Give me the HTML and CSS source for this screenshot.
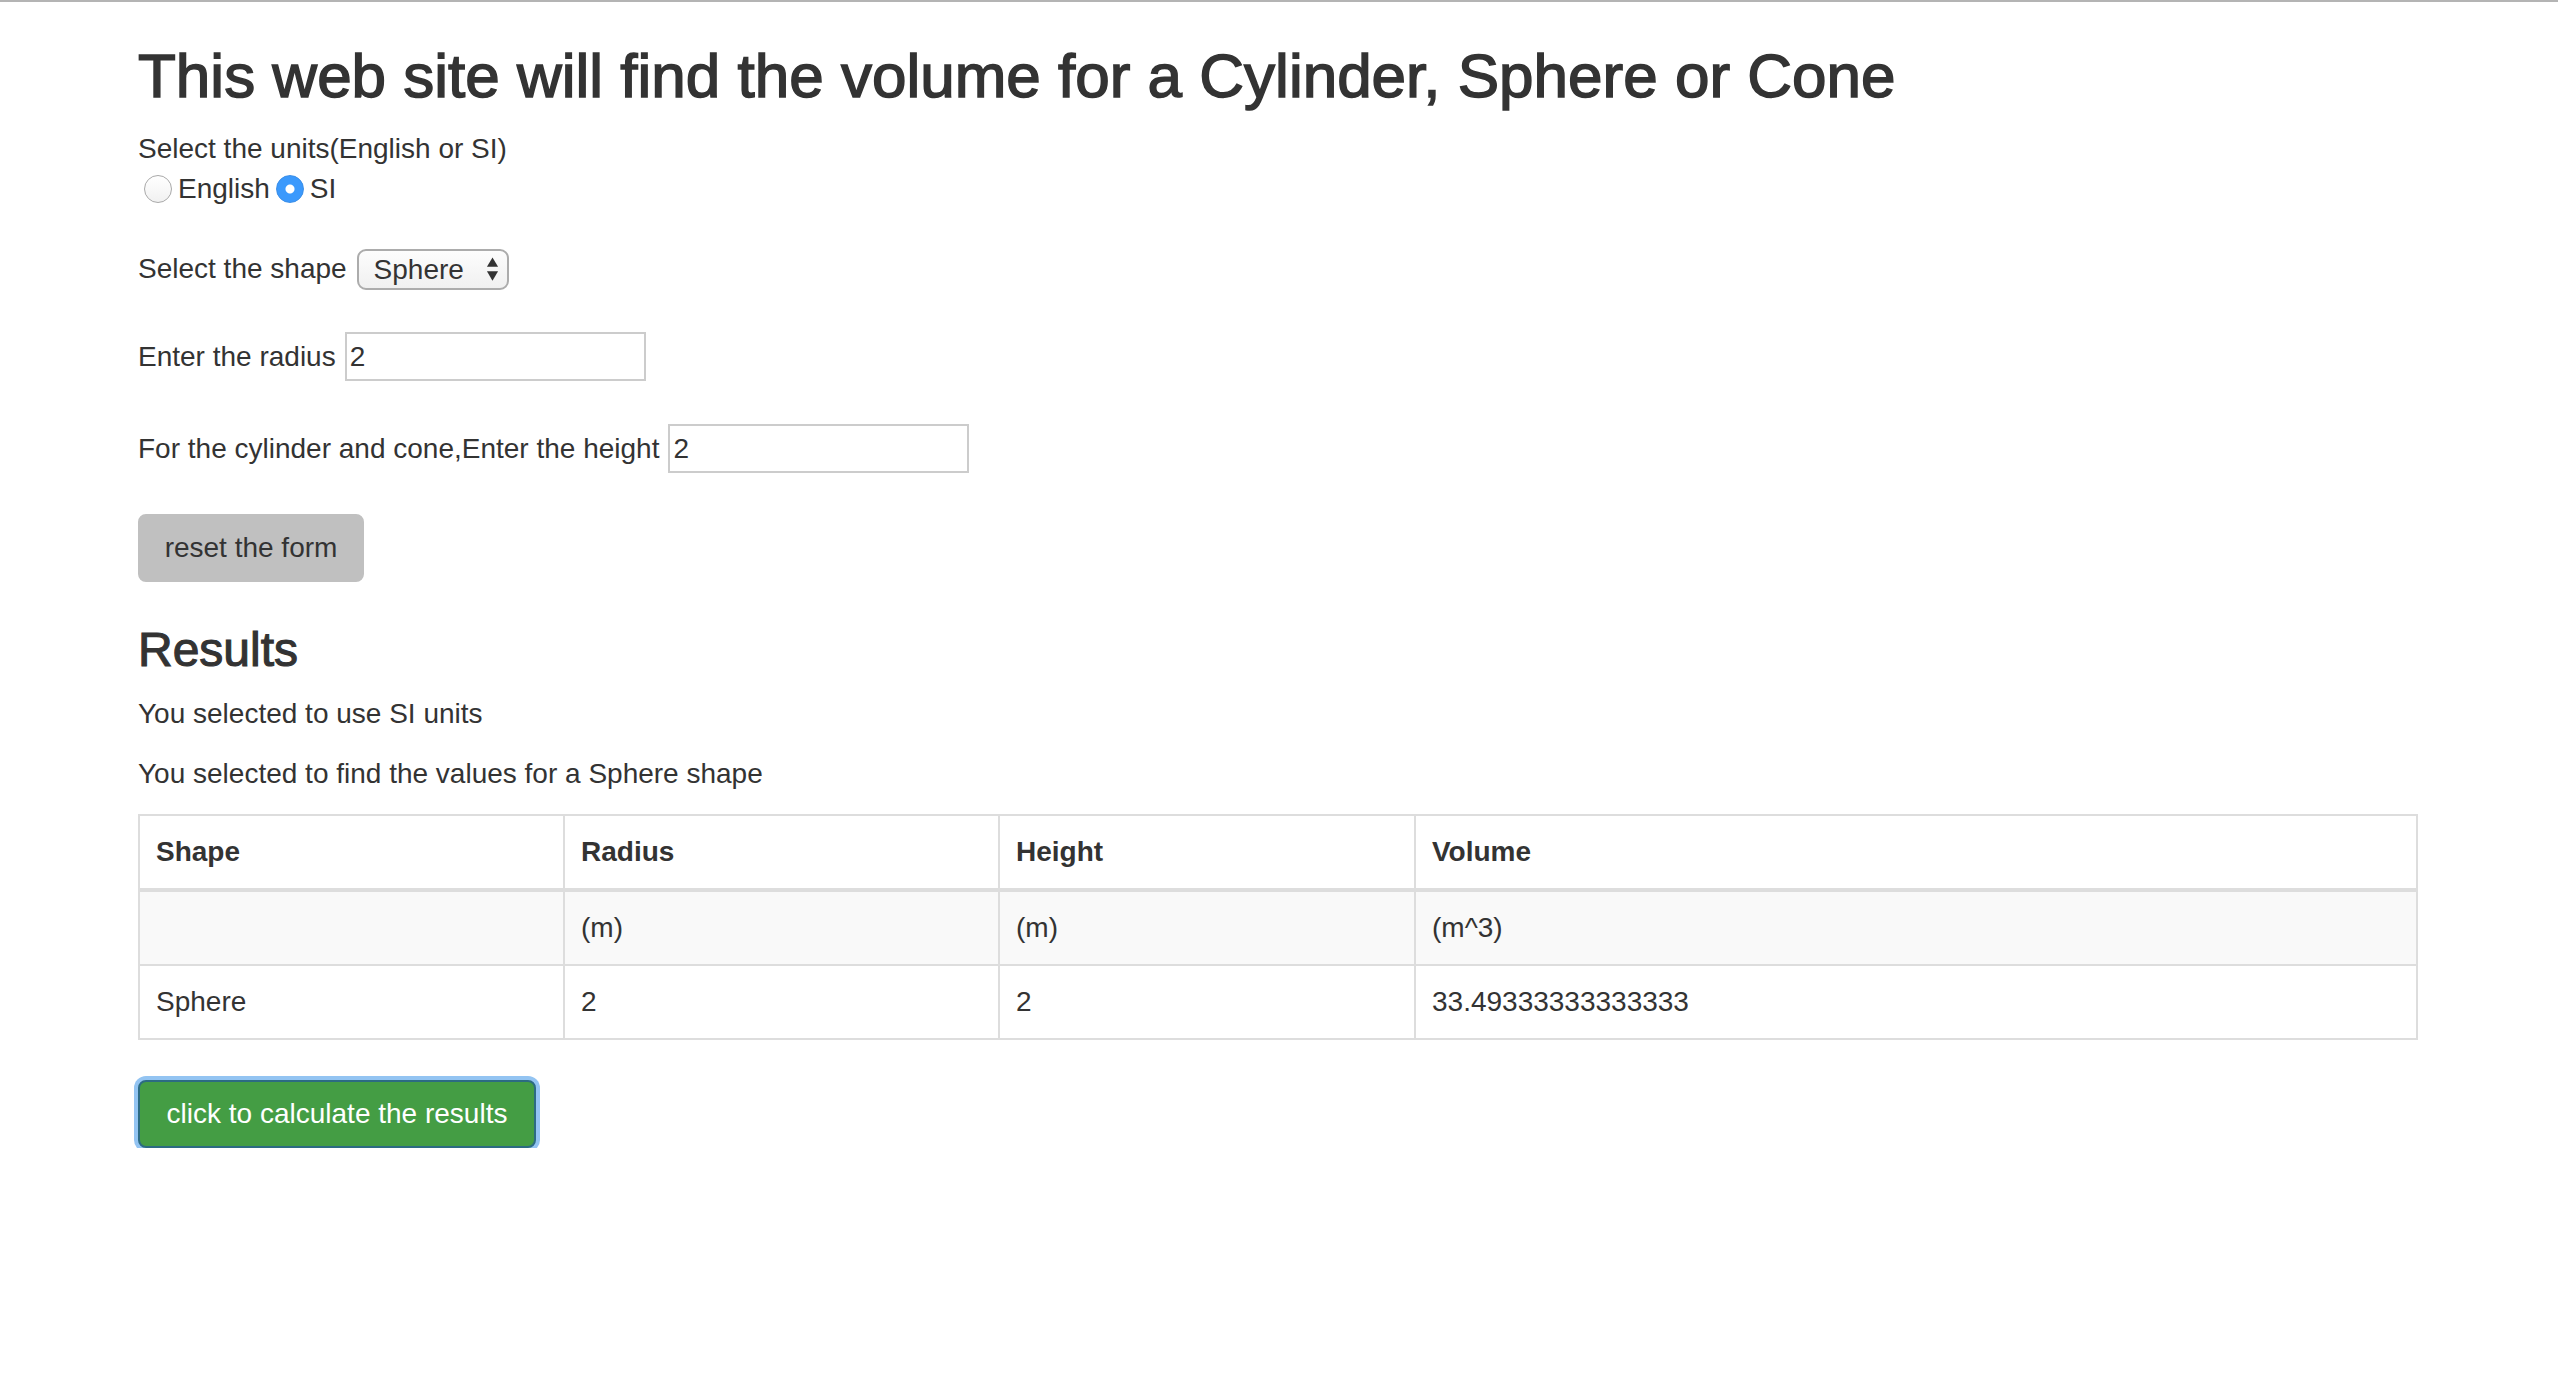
FILE: index.html
```html
<!DOCTYPE html>
<html lang="en">
<head>
<meta charset="utf-8">
<title>Volume calculator</title>
<link rel="stylesheet" href="styles.css">
</head>
<body>
<div class="topline"></div>
<div class="container">
  <h2 class="title">This web site will find the volume for a Cylinder, Sphere or Cone</h2>
  <form class="calc">
    <div class="units-label">Select the units(English or SI)</div>
    <div class="radio-row">
      <input class="radio" type="radio" name="units" id="u-en"><label for="u-en" class="radio-label">English</label>
      <input class="radio" type="radio" name="units" id="u-si" checked><label for="u-si" class="radio-label">SI</label>
    </div>
    <div class="field field-shape">
      <label for="shape">Select the shape</label>
      <span class="select-wrap">
        <select id="shape" class="select"><option>Cylinder</option><option selected>Sphere</option><option>Cone</option></select>
        <svg class="select-arrows" width="14" height="26" viewBox="0 0 14 26"><path d="M7 0 L13 10 L1 10 Z" fill="#333"/><path d="M1 15 L13 15 L7 25 Z" fill="#333"/></svg>
      </span>
    </div>
    <div class="field field-radius">
      <label for="radius">Enter the radius</label>
      <input id="radius" class="text-input" type="text" value="2">
    </div>
    <div class="field field-height">
      <label for="height">For the cylinder and cone,Enter the height</label>
      <input id="height" class="text-input" type="text" value="2">
    </div>
    <button type="reset" class="btn btn-reset">reset the form</button>
  </form>

  <h3 class="results-title">Results</h3>
  <p class="info">You selected to use SI units</p>
  <p class="info">You selected to find the values for a Sphere shape</p>

  <table class="results">
    <colgroup>
      <col class="c1"><col class="c2"><col class="c3"><col class="c4">
    </colgroup>
    <thead>
      <tr><th>Shape</th><th>Radius</th><th>Height</th><th>Volume</th></tr>
    </thead>
    <tbody>
      <tr class="striped"><td></td><td>(m)</td><td>(m)</td><td>(m^3)</td></tr>
      <tr><td>Sphere</td><td>2</td><td>2</td><td>33.49333333333333</td></tr>
    </tbody>
  </table>

  <button type="button" class="btn btn-calc">click to calculate the results</button>
</div>
</body>
</html>
```

FILE: styles.css
```css
html, body {
  margin: 0;
  padding: 0;
  background: #ffffff;
}
body {
  font-family: "Liberation Sans", Arial, Helvetica, sans-serif;
  font-size: 28px;
  line-height: 40px;
  color: #333333;
}
.topline {
  height: 2px;
  background: #b4b4b4;
}
.container {
  width: 2278px;
  margin: 0 0 0 138px;
}
.title {
  font-size: 62px;
  line-height: 68px;
  font-weight: normal;
  -webkit-text-stroke: 1.5px #333333;
  margin: 40px 0 19px 0;
  color: #333333;
}
.calc {
  margin: 0;
}
.units-label {
  height: 40px;
}
.radio-row {
  display: flex;
  align-items: center;
  height: 40px;
}
.radio {
  -webkit-appearance: none;
  appearance: none;
  width: 28px;
  height: 28px;
  margin: 0 6px 0 6px;
  border-radius: 50%;
  border: 1px solid #a9a9a9;
  background: linear-gradient(#ffffff, #f1f1f1);
  box-sizing: border-box;
}
.radio:checked {
  border: 1px solid #3a8ee8;
  background: radial-gradient(circle, #ffffff 0, #ffffff 4px, #3b99fc 5px);
}
.radio-label {
  margin-right: 0;
}
.field {
  display: flex;
  align-items: center;
  column-gap: 9px;
}
.field-shape {
  margin-top: 39px;
  height: 42px;
}
.field-radius {
  margin-top: 42px;
  height: 49px;
}
.field-height {
  margin-top: 43px;
  height: 49px;
}
.select-wrap {
  position: relative;
  display: inline-block;
  height: 41px;
  margin-left: 1px;
}
.select {
  -webkit-appearance: none;
  appearance: none;
  width: 152px;
  height: 41px;
  box-sizing: border-box;
  border: 2px solid #acacac;
  border-radius: 9px;
  background: linear-gradient(#fdfdfd, #f0f0f0);
  font-family: inherit;
  font-size: 28px;
  color: #333333;
  padding: 0 0 0 15px;
  margin: 0;
}
.select-arrows {
  position: absolute;
  right: 10px;
  top: 8px;
  width: 13px;
  height: 25px;
  pointer-events: none;
}
.text-input {
  width: 301px;
  height: 49px;
  box-sizing: border-box;
  border: 2px solid #cccccc;
  padding: 2px 3px;
  font-family: inherit;
  font-size: 28px;
  color: #333333;
  margin: 0;
  outline: none;
}
.btn {
  display: inline-block;
  font-family: inherit;
  font-size: 28px;
  line-height: 40px;
  padding: 12px 24px;
  border: 2px solid transparent;
  border-radius: 8px;
  margin: 0;
  cursor: pointer;
}
.btn-reset {
  margin-top: 41px;
  background: #c0c0c0;
  border-color: #c0c0c0;
  color: #333333;
  width: 226px;
  height: 68px;
  box-sizing: border-box;
}
.results-title {
  font-size: 48px;
  line-height: 53px;
  font-weight: normal;
  -webkit-text-stroke: 1.1px #333333;
  margin: 41px 0 18px 0;
}
.info {
  margin: 0 0 20px 0;
}
.results {
  width: 2278px;
  table-layout: fixed;
  border-collapse: collapse;
  border: 2px solid #dddddd;
  margin: 0 0 40px 0;
}
.results col.c1 { width: 425px; }
.results col.c2 { width: 435px; }
.results col.c3 { width: 416px; }
.results col.c4 { width: 1002px; }
.results th,
.results td {
  border: 2px solid #dddddd;
  padding: 16px 16px;
  line-height: 40px;
  text-align: left;
  vertical-align: top;
  height: 40px;
}
.results th {
  font-weight: bold;
  border-bottom-width: 4px;
}
.results tr.striped td {
  background: #f9f9f9;
}
.btn-calc {
  background: #449d44;
  border-color: #2c6b82;
  color: #ffffff;
  width: 398px;
  height: 68px;
  box-sizing: border-box;
  padding: 12px 0;
  text-align: center;
  box-shadow: 0 0 0 4px #93c4f2;
  margin-left: 0;
}
```
